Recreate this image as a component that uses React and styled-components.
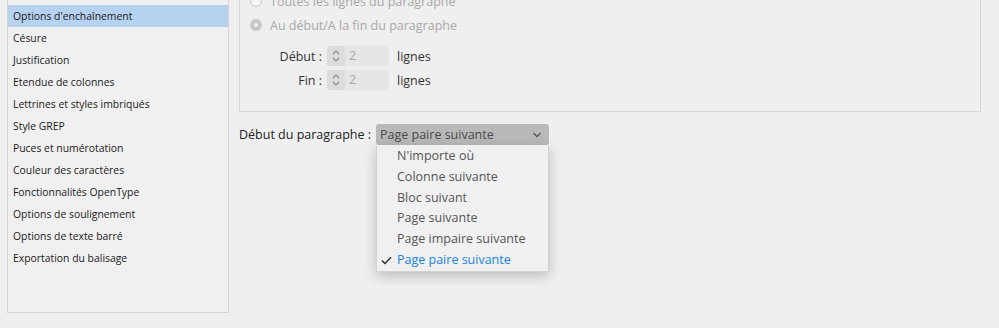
import React from 'react'
import styled, { createGlobalStyle } from 'styled-components'

const GlobalStyle = createGlobalStyle`
  html, body {
    margin: 0;
    padding: 0;
    background: #efefef;
    overflow: hidden;
  }
  body {
    font-family: "Open Sans", "Liberation Sans", sans-serif;
    color: #2a2a2a;
  }
`

const categories = [
  "Options d'enchaînement",
  'Césure',
  'Justification',
  'Etendue de colonnes',
  'Lettrines et styles imbriqués',
  'Style GREP',
  'Puces et numérotation',
  'Couleur des caractères',
  'Fonctionnalités OpenType',
  'Options de soulignement',
  'Options de texte barré',
  'Exportation du balisage',
]

const options = [
  "N'importe où",
  'Colonne suivante',
  'Bloc suivant',
  'Page suivante',
  'Page impaire suivante',
  'Page paire suivante',
]

function App() {
  const selected = 'Page paire suivante'
  return (
    <Page>
      <GlobalStyle />
      <Sidebar>
        {categories.map((name, i) => (
          <SideItem key={name} $active={i === 0}>{name}</SideItem>
        ))}
      </Sidebar>

      <Content>
        <Fieldset>
          <RadioRow>
            <Radio />
            <RadioLabel>Toutes les lignes du paragraphe</RadioLabel>
          </RadioRow>
          <RadioRow>
            <Radio $checked />
            <RadioLabel>Au début/A la fin du paragraphe</RadioLabel>
          </RadioRow>

          <SpinGroup>
            {['Début :', 'Fin :'].map((label) => (
              <SpinRow key={label}>
                <SpinLabel>{label}</SpinLabel>
                <Stepper>
                  <Arrows>
                    <svg width="10" height="16" viewBox="0 0 10 16">
                      <path d="M2 6 L5 3 L8 6" fill="none" stroke="#8a8a8a" strokeWidth="1.1" />
                      <path d="M2 10 L5 13 L8 10" fill="none" stroke="#8a8a8a" strokeWidth="1.1" />
                    </svg>
                  </Arrows>
                  <SpinValue>2</SpinValue>
                </Stepper>
                <Unit>lignes</Unit>
              </SpinRow>
            ))}
          </SpinGroup>
        </Fieldset>

        <SelectRow>
          <SelectLabel>Début du paragraphe :</SelectLabel>
          <SelectWrap>
            <SelectBox>
              <span>{selected}</span>
              <svg width="10" height="6" viewBox="0 0 10 6">
                <path d="M1.5 1 L5 4.5 L8.5 1" fill="none" stroke="#555" strokeWidth="1.3" />
              </svg>
            </SelectBox>
            <Menu>
              {options.map((opt) => (
                <MenuItem key={opt} $selected={opt === selected}>
                  {opt === selected && (
                    <Check width="11" height="9" viewBox="0 0 11 9">
                      <path d="M1 4.6 L4 7.5 L10 1.2" fill="none" stroke="#333" strokeWidth="1.5" />
                    </Check>
                  )}
                  {opt}
                </MenuItem>
              ))}
            </Menu>
          </SelectWrap>
        </SelectRow>
      </Content>
    </Page>
  )
}

const Page = styled.div`
  display: flex;
  align-items: flex-start;
  gap: 10px;
  width: 999px;
  height: 328px;
  padding-left: 7px;
  box-sizing: border-box;
  overflow: hidden;
`

const Sidebar = styled.ul`
  list-style: none;
  margin: -4px 0 0;
  padding: 8px 0 0;
  width: 222px;
  height: 317px;
  box-sizing: border-box;
  border: 1px solid #d6d6d6;
  background: #f0f0f0;
  display: flex;
  flex-direction: column;
`

const SideItem = styled.li`
  height: 22px;
  line-height: 22px;
  padding-left: 5px;
  font-size: 10.4px;
  color: #1a1a1a;
  background: ${(p) => (p.$active ? '#b6d2f0' : 'transparent')};
  white-space: nowrap;
`

const Content = styled.div`
  width: 742px;
  display: flex;
  flex-direction: column;
`

const Fieldset = styled.div`
  margin-top: -11px;
  padding: 0 10px 21px;
  border: 1px solid #d8d8d8;
  border-top: none;
  display: flex;
  flex-direction: column;
`

const RadioRow = styled.div`
  display: flex;
  align-items: center;
  gap: 8px;
  height: 24px;
`

const Radio = styled.span`
  width: 12px;
  height: 12px;
  box-sizing: border-box;
  border-radius: 50%;
  border: ${(p) => (p.$checked ? '4px solid #c6c6c6' : '1px solid #c6c6c6')};
  background: ${(p) => (p.$checked ? '#f4f4f4' : '#f6f6f6')};
`

const RadioLabel = styled.span`
  font-size: 12.5px;
  color: #a9a9a9;
  white-space: nowrap;
`

const SpinGroup = styled.div`
  display: flex;
  flex-direction: column;
  gap: 4px;
  margin-top: 9px;
`

const SpinRow = styled.div`
  display: flex;
  align-items: center;
  height: 20px;
`

const SpinLabel = styled.span`
  width: 72px;
  text-align: right;
  font-size: 12.5px;
  color: #333;
`

const Stepper = styled.div`
  display: flex;
  margin-left: 5px;
  width: 62px;
  height: 20px;
  border-radius: 2px;
  overflow: hidden;
  background: #e6e6e6;
`

const Arrows = styled.div`
  width: 18px;
  display: flex;
  align-items: center;
  justify-content: center;
  background: #dddddd;
`

const SpinValue = styled.span`
  padding-left: 4px;
  font-size: 12.5px;
  line-height: 20px;
  color: #a8a8a8;
`

const Unit = styled.span`
  margin-left: 8px;
  font-size: 12.5px;
  color: #333;
`

const SelectRow = styled.div`
  display: flex;
  align-items: flex-start;
  margin-top: 12px;
`

const SelectLabel = styled.span`
  width: 137px;
  flex-shrink: 0;
  white-space: nowrap;
  font-size: 12.5px;
  line-height: 21px;
  color: #222;
`

const SelectWrap = styled.div`
  position: relative;
  width: 173px;
`

const SelectBox = styled.div`
  height: 21px;
  box-sizing: border-box;
  display: flex;
  align-items: center;
  justify-content: space-between;
  padding: 0 7px 0 4px;
  border-radius: 3px;
  background: #b9b9b9;
  font-size: 12.5px;
  color: #4a4a4a;
`

const Menu = styled.div`
  position: absolute;
  top: 21px;
  left: 0;
  width: 173px;
  box-sizing: border-box;
  padding-top: 1px;
  background: #f0f0f0;
  border: 1px solid #d2d2d2;
  border-top: none;
  box-shadow: 0 4px 12px rgba(0, 0, 0, 0.22);
  display: flex;
  flex-direction: column;
`

const MenuItem = styled.div`
  position: relative;
  height: 20.8px;
  line-height: 20.8px;
  padding-left: 20px;
  font-size: 12.5px;
  color: ${(p) => (p.$selected ? '#1a84e6' : '#555')};
`

const Check = styled.svg`
  position: absolute;
  left: 4px;
  top: 6px;
`

export default App
